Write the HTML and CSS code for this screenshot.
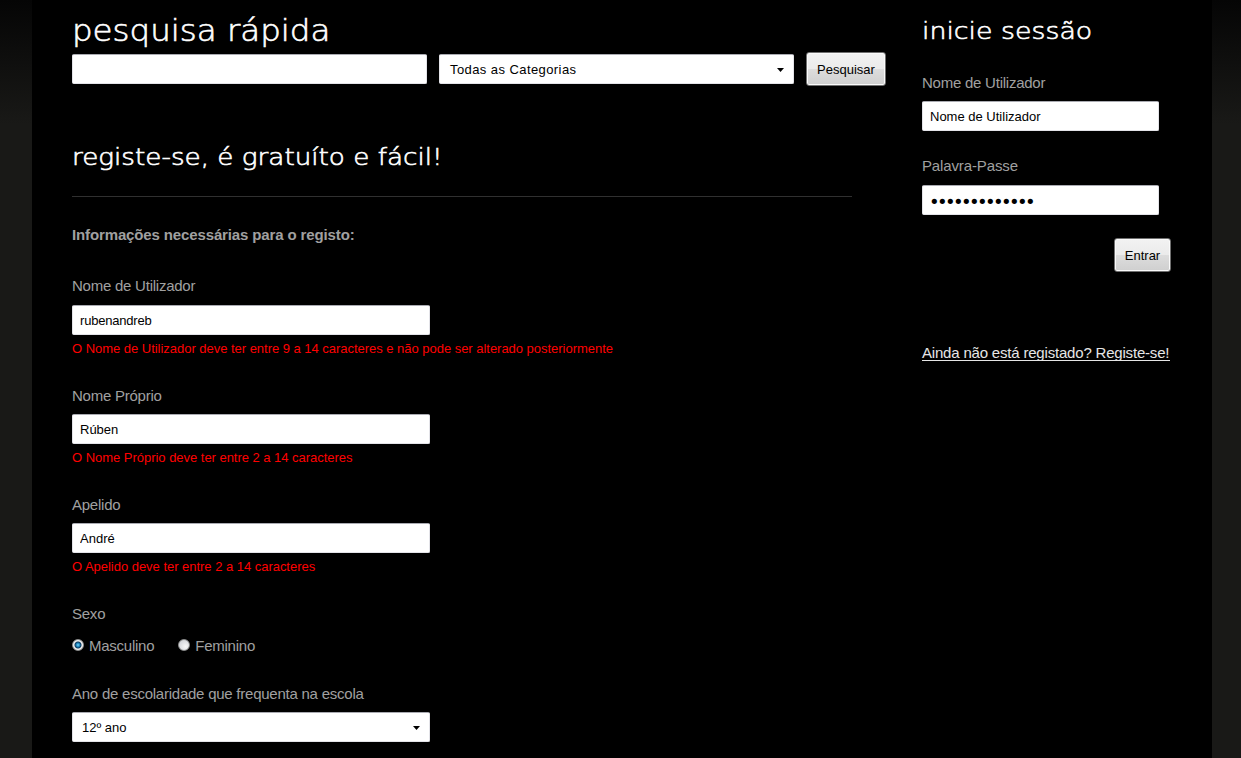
FILE: index.html
```html
<!DOCTYPE html>
<html lang="pt">
<head>
<meta charset="utf-8">
<title>Registo</title>
<link rel="stylesheet" href="styles.css">
</head>
<body>
<div class="page">
  <main class="main">
    <h1 class="title">pesquisa rápida</h1>
    <form class="search">
      <input class="field" type="text" aria-label="Pesquisa">
      <div class="select"><span>Todas as Categorias</span><svg class="arrow" viewBox="0 0 7 4"><path d="M0 0h7L3.5 4z"/></svg></div>
      <button class="button" type="button">Pesquisar</button>
    </form>
    <h2 class="heading heading-register">registe-se, é gratuíto e fácil!</h2>
    <form class="register">
      <p class="intro">Informações necessárias para o registo:</p>
      <div class="row row-first">
        <label class="label" for="user">Nome de Utilizador</label>
        <input class="field field-user" id="user" type="text" value="rubenandreb">
        <p class="error">O Nome de Utilizador deve ter entre 9 a 14 caracteres e não pode ser alterado posteriormente</p>
      </div>
      <div class="row">
        <label class="label" for="first">Nome Próprio</label>
        <input class="field" id="first" type="text" value="Rúben">
        <p class="error">O Nome Próprio deve ter entre 2 a 14 caracteres</p>
      </div>
      <div class="row">
        <label class="label" for="last">Apelido</label>
        <input class="field" id="last" type="text" value="André">
        <p class="error">O Apelido deve ter entre 2 a 14 caracteres</p>
      </div>
      <div class="row row-gender">
        <span class="label">Sexo</span>
        <div class="radios">
          <label class="option"><input class="radio" type="radio" name="sex" checked><span>Masculino</span></label>
          <label class="option"><input class="radio" type="radio" name="sex"><span>Feminino</span></label>
        </div>
      </div>
      <div class="row">
        <span class="label">Ano de escolaridade que frequenta na escola</span>
        <div class="select"><span>12º ano</span><svg class="arrow" viewBox="0 0 7 4"><path d="M0 0h7L3.5 4z"/></svg></div>
      </div>
    </form>
  </main>
  <aside class="sidebar">
    <h2 class="heading heading-login">inicie sessão</h2>
    <form class="login">
      <label class="label" for="login">Nome de Utilizador</label>
      <input class="field" id="login" type="text" value="Nome de Utilizador">
      <label class="label label-pass" for="pass">Palavra-Passe</label>
      <input class="field password" id="pass" type="password" value="palavra-passe">
      <button class="button" type="button">Entrar</button>
    </form>
    <a class="signup" href="#">Ainda não está registado? Registe-se!</a>
  </aside>
</div>
</body>
</html>
```
FILE: styles.css
```css
* { box-sizing: border-box; }
body {
  margin: 0;
  height: 758px;
  overflow: hidden;
  background: #191917 linear-gradient(#050505, #191917) repeat-x 0 0 / 100% 124px;
  font: 15px/20px "Liberation Sans", Arial, sans-serif;
  color: #a0a0a0;
}
h1, h2, p { margin: 0; font-weight: normal; }
.page {
  display: flex;
  width: 1180px;
  height: 758px;
  margin-left: 32px;
  padding: 0 40px;
  background: #000;
}
.main { width: 850px; }
.sidebar { width: 249px; }
.title, .heading {
  font-family: "DejaVu Sans", sans-serif;
  font-weight: 200;
  -webkit-text-stroke: 0.6px #fff;
  color: #fff;
  white-space: nowrap;
  transform-origin: 0 0;
}
.title {
  padding-top: 12px;
  font-size: 30px;
  line-height: 38px;
  transform: scaleX(1.083);
}
.heading { font-size: 23px; line-height: 30px; }
.search {
  display: flex;
  align-items: center;
  gap: 12px;
  height: 34px;
  margin-top: 2px;
}
.field, .select {
  display: flex;
  align-items: center;
  width: 358px;
  height: 30px;
  padding: 0 7px;
  border: 1px solid #e3e3e8;
  border-top-color: #aaabb2;
  border-radius: 2px;
  background: #fff;
  font: 13px/20px "Liberation Sans", Arial, sans-serif;
  color: #000;
}
.field-user { letter-spacing: -0.2px; }
.select { justify-content: space-between; padding: 2px 9px 0; }
.search .field, .search .select { width: 355px; }
.search .select { padding-left: 10px; letter-spacing: 0.42px; }
.arrow { width: 7px; height: 4px; }
.button {
  width: 80px;
  height: 34px;
  padding: 2px 0 0;
  border: 1px solid #707070;
  border-radius: 3px;
  background: linear-gradient(#f2f2f2, #ebebeb 49%, #ddd 50%, #cfcfcf);
  box-shadow: inset 0 0 0 1px #fafafa;
  font: 13px/20px "Liberation Sans", Arial, sans-serif;
  color: #000;
}
.heading-register { margin-top: 56px; transform: scaleX(1.14); }
.register {
  width: 780px;
  margin-top: 24px;
  padding-top: 28px;
  border-top: 1px solid #303030;
}
.intro { font-weight: bold; letter-spacing: -0.13px; }
.row { display: flex; flex-direction: column; margin-top: 27px; }
.row-first { margin-top: 31px; }
.label { display: block; margin-bottom: 8px; letter-spacing: -0.24px; }
.row-first .label { margin-bottom: 9px; }
.error {
  margin-top: 4px;
  font-size: 13px;
  letter-spacing: -0.027px;
  color: #f00;
  white-space: nowrap;
}
.row-gender .label { margin-bottom: 12px; }
.radios { display: flex; gap: 24px; letter-spacing: -0.25px; }
.row-gender + .row { margin-top: 28px; }
.option { display: flex; align-items: center; gap: 5px; }
.radio {
  appearance: none;
  width: 12px;
  height: 12px;
  margin: -2px 0 0;
  border: 1px solid #8e8f8f;
  border-radius: 50%;
  background: radial-gradient(circle at 65% 65%, #f8f8f8, #c8cbd0);
}
.radio:checked { background: radial-gradient(circle, #5fc0ea 0 0.5px, #1478b0 2px, #103a5c 3px, #f0f0f0 4px); }
.heading-login { margin-top: 16px; transform: scaleX(1.165); }
.login { display: flex; flex-direction: column; margin-top: 27px; }
.login .field { width: 237px; }
.login .label-pass { margin-top: 25px; margin-bottom: 9px; letter-spacing: -0.13px; }
.login .password {
  padding: 2px 6px 0;
  font-family: "DejaVu Sans", sans-serif;
  font-size: 18px;
  letter-spacing: -2.62px;
}
.login .button { align-self: flex-end; width: 57px; margin-top: 23px; }
.signup {
  display: block;
  width: 248px;
  height: 18px;
  margin-top: 71px;
  border-bottom: 1px solid #e6e6e6;
  letter-spacing: -0.19px;
  color: #e6e6e6;
  white-space: nowrap;
  text-decoration: none;
}
```
